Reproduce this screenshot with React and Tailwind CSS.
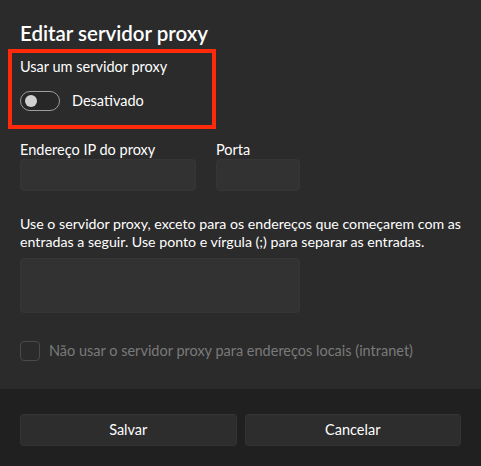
import React, { useState } from 'react';

function Toggle({ on, onChange }) {
  return (
    <button
      type="button"
      onClick={() => onChange(!on)}
      className="flex items-center gap-3"
    >
      <span className="relative block w-[40px] h-[20px] rounded-full border border-[#9d9d9d] bg-[#272727]">
        <span className="absolute left-[4px] top-[3px] w-[12px] h-[12px] rounded-full bg-[#d0d0d0]" />
      </span>
      <span className="text-[14.5px] text-white">{on ? 'Ativado' : 'Desativado'}</span>
    </button>
  );
}

export default function App() {
  const [useProxy, setUseProxy] = useState(false);

  return (
    <div
      className="w-[481px] h-[466px] flex flex-col bg-[#2b2b2b] text-white overflow-hidden"
      style={{ fontFamily: 'Lato, "Noto Sans", sans-serif' }}
    >
      <div className="flex-1 flex flex-col px-5 pt-[19px]">
        <h1 className="text-[20.5px] leading-[28px] font-semibold">Editar servidor proxy</h1>

        {/* highlighted section */}
        <div className="-mx-3 mt-[2px] w-[208px] border-4 border-[#ff2a0a] px-2 pt-[4px] pb-[13px]">
          <p className="text-[14.5px] leading-[20px]">Usar um servidor proxy</p>
          <div className="mt-[13px]">
            <Toggle on={useProxy} onChange={setUseProxy} />
          </div>
        </div>

        <div className="flex gap-5 mt-[12px]">
          <div className="flex flex-col">
            <label className="text-[14.5px] leading-[18px]">Endereço IP do proxy</label>
            <input className="w-[176px] h-[32px] rounded-[4px] bg-[#323232] border border-[#363636] outline-none px-2" />
          </div>
          <div className="flex flex-col">
            <label className="text-[14.5px] leading-[18px]">Porta</label>
            <input className="w-[84px] h-[32px] rounded-[4px] bg-[#323232] border border-[#363636] outline-none px-2" />
          </div>
        </div>

        <p className="mt-[24px] text-[14.2px] leading-[18px]">
          Use o servidor proxy, exceto para os endereços que começarem com as entradas a seguir. Use ponto e vírgula (;) para separar as entradas.
        </p>
        <textarea className="mt-[7px] w-[280px] h-[55px] rounded-[4px] bg-[#323232] border border-[#363636] outline-none resize-none" />

        <label className="mt-[27px] flex items-center gap-[9px]">
          <span className="w-[20px] h-[20px] rounded-[4px] border border-[#4a4a4a]" />
          <span className="text-[14.5px] text-[#7a7a7a]">Não usar o servidor proxy para endereços locais (intranet)</span>
        </label>
      </div>

      <div className="h-[77px] bg-[#202020] px-5 pt-[25px] grid grid-cols-2 gap-2 content-start">
        <button className="h-[32px] rounded-[4px] bg-[#2d2d2d] border border-[#333333] border-t-[#363636] text-[14.5px]">Salvar</button>
        <button className="h-[32px] rounded-[4px] bg-[#2d2d2d] border border-[#333333] border-t-[#363636] text-[14.5px]">Cancelar</button>
      </div>
    </div>
  );
}
